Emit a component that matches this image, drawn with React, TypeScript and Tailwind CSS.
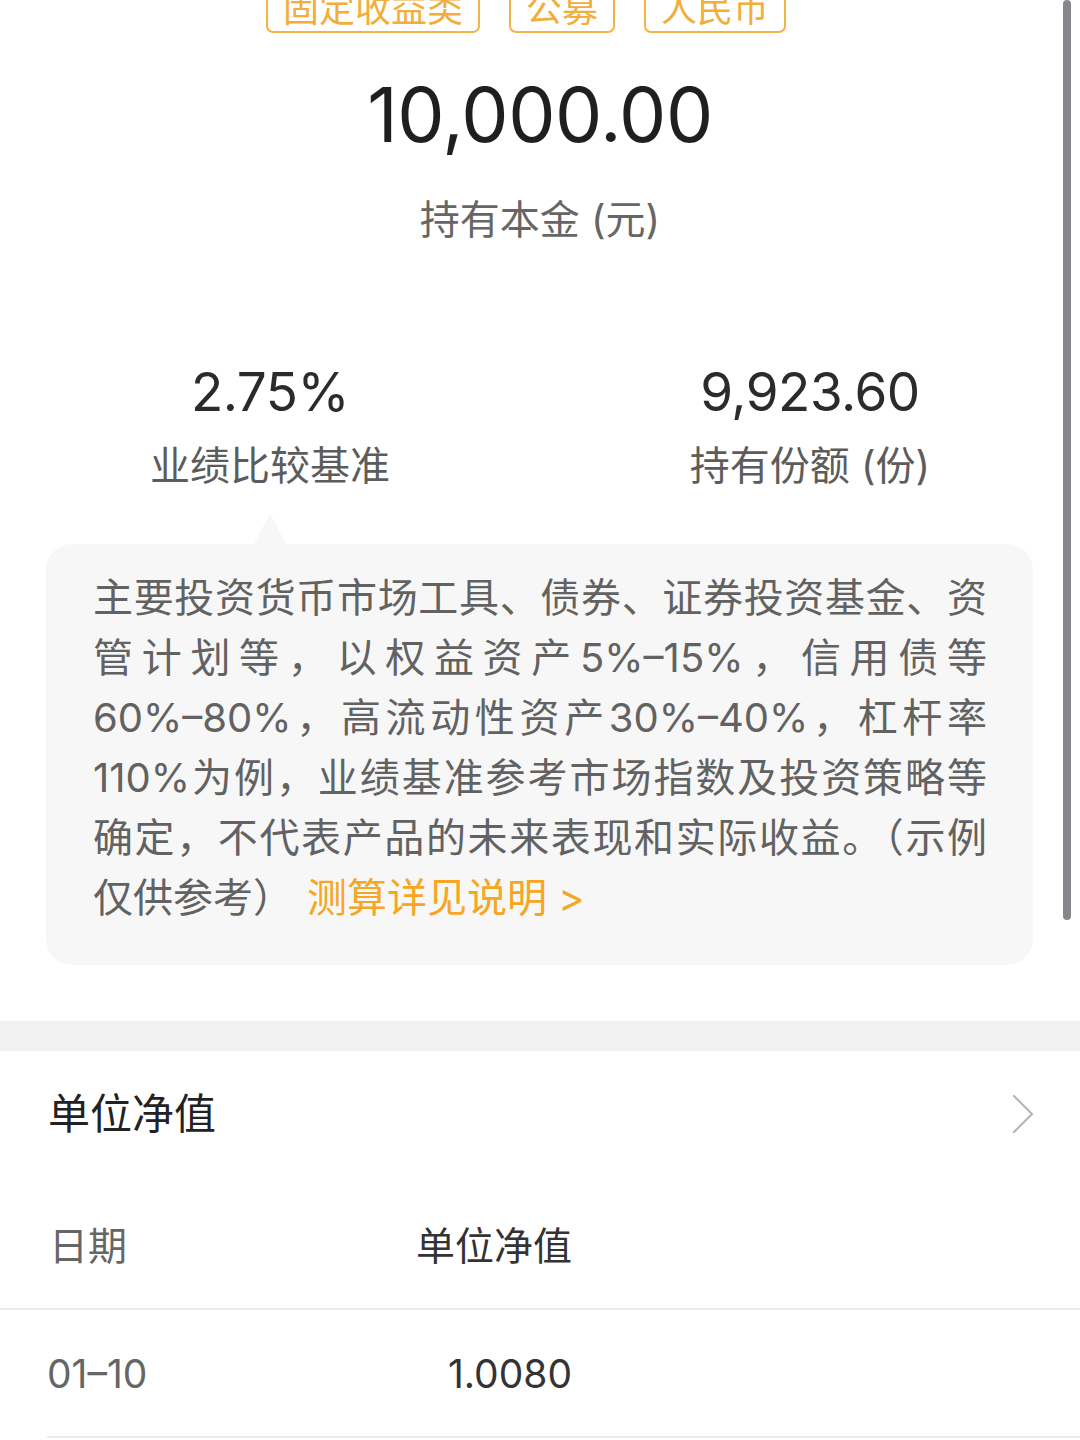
const FONT = "font-['Inter','Noto_Sans_CJK_SC',sans-serif]";

const tags = ["固定收益类", "公募", "人民币"];

const lines = [
  "主要投资货币市场工具、债券、证券投资基金、资",
  "管计划等，以权益资产5%–15%，信用债等",
  "60%–80%，高流动性资产30%–40%，杠杆率",
  "110%为例，业绩基准参考市场指数及投资策略等",
  "确定，不代表产品的未来表现和实际收益。（示例",
];

function Stat({ value, label }: { value: string; label: string }) {
  return (
    <div className="flex flex-1 flex-col items-center">
      <div className="h-[64px] text-[53px] leading-[64px] tracking-[-0.5px] text-[#2b2b2b]">{value}</div>
      <div className="mt-[14px] h-[56px] text-[40px] leading-[56px] text-[#5c5c5c]">{label}</div>
    </div>
  );
}

export default function App() {
  return (
    <div className={`relative min-h-[1440px] w-[1080px] overflow-hidden bg-white ${FONT}`}>
      {/* scrollbar */}
      <div className="absolute right-[9px] top-0 h-[920px] w-[8px] rounded-full bg-[#86868b]" />

      <div className="mt-[-15px] flex justify-center gap-[29px] pr-[28px]">
        {tags.map((t) => (
          <div
            key={t}
            className="flex h-[48px] items-center rounded-[7px] border-2 border-[#f3b447] px-[15px] text-[36px] leading-none text-[#f3ad3a]"
          >
            {t}
          </div>
        ))}
      </div>

      <div className="mt-[37px] h-[90px] text-center text-[75px] leading-[90px] tracking-[-0.5px] text-[#1f1f1f]">
        10,000.00
      </div>
      <div className="mt-[30px] h-[60px] text-center text-[40px] leading-[60px] text-[#666]">
        持有本金 (元)
      </div>

      <div className="mt-[110px] flex">
        <Stat value="2.75%" label="业绩比较基准" />
        <Stat value="9,923.60" label="持有份额 (份)" />
      </div>

      <div className="mt-[19px] pl-[46px] pr-[47px]">
        <div className="ml-[208px] h-0 w-0 border-x-[16px] border-b-[31px] border-x-transparent border-b-[#f7f7f7]" />
        <div className="rounded-[26px] bg-[#f7f7f7] pb-[37px] pl-[47px] pr-[46px] pt-[24px] text-[40px] leading-[60px] text-[#626262]">
          {lines.map((l) => (
            <div key={l} className="text-justify [text-align-last:justify]">
              {l}
            </div>
          ))}
          <div>
            仅供参考）
            <span className="ml-[14px] text-[#f5a623]">测算详见说明 &gt;</span>
          </div>
        </div>
      </div>

      <div className="mt-[56px] h-[30px] bg-[#f2f2f2]" />

      <div className="mt-[33px] flex items-center justify-between pl-[48px] pr-[46px]">
        <div className="h-[60px] text-[42px] leading-[60px] text-[#222]">单位净值</div>
        <svg width="22" height="40" viewBox="0 0 22 40" fill="none">
          <path d="M2 2 L20 20 L2 38" stroke="#b5b5b5" strokeWidth="2.2" strokeLinecap="round" strokeLinejoin="round" />
        </svg>
      </div>

      <div className="mt-[74px] border-b-2 border-[#ececec] pb-[34px]">
        <div className="flex pl-[49px] text-[39px] leading-[56px]">
          <div className="w-[300px] text-[#666]">日期</div>
          <div className="w-[223px] text-right text-[#333]">单位净值</div>
        </div>
      </div>

      <div className="ml-[47px] border-b-2 border-[#ececec] pb-[34px] pt-[36px]">
        <div className="flex text-[39px] leading-[56px]">
          <div className="w-[300px] text-[#666]">01–10</div>
          <div className="w-[225px] text-right text-[#333]">1.0080</div>
        </div>
      </div>
    </div>
  );
}
